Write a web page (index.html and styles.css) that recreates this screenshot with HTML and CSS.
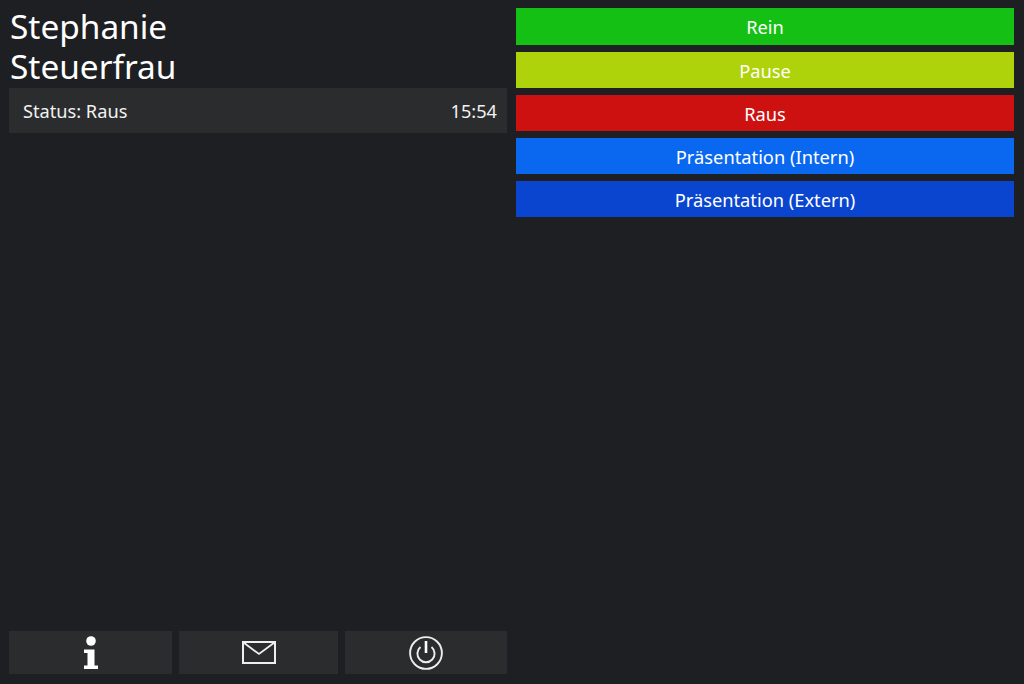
FILE: index.html
```html
<!DOCTYPE html>
<html lang="de">
<head>
    <meta charset="UTF-8">
    <meta name="viewport" content="width=device-width, initial-scale=1.0">
    <title>Stephanie Steuerfrau</title>
    <link rel="stylesheet" href="styles.css">
</head>
<body>
    <div class="app">
        <!-- Name, status and toolbar -->
        <div class="left-col">
            <h1 class="user-name">Stephanie<br>Steuerfrau</h1>
            <div class="status-row">
                <span>Status: Raus</span>
                <span>15:54</span>
            </div>
            <div class="toolbar">
                <button class="tool-btn tool-info" aria-label="Info">
                    <svg width="16" height="34" viewBox="0 0 16 34">
                        <circle cx="8" cy="5" r="4.8" fill="#fff"/>
                        <path d="M1 13.5H11.5V29.5H15V33H1V29.5H4.5V17H1Z" fill="#fff"/>
                    </svg>
                </button>
                <button class="tool-btn tool-mail" aria-label="Nachricht">
                    <svg width="34" height="24" viewBox="0 0 34 24">
                        <rect x="1" y="1" width="32" height="21" fill="none" stroke="#eee" stroke-width="2"/>
                        <path d="M1.5 1.5L17 13L32.5 1.5" fill="none" stroke="#eee" stroke-width="1.8"/>
                    </svg>
                </button>
                <button class="tool-btn tool-power" aria-label="Beenden">
                    <svg width="34" height="34" viewBox="0 0 34 34">
                        <circle cx="17" cy="17" r="15.9" fill="none" stroke="#eee" stroke-width="1.9"/>
                        <path d="M11.5 11A8.6 8.6 0 1 0 22.5 11" fill="none" stroke="#eee" stroke-width="1.9"/>
                        <path d="M17 5V17" fill="none" stroke="#fff" stroke-width="2.6"/>
                    </svg>
                </button>
            </div>
        </div>

        <!-- Status buttons -->
        <div class="right-col">
            <button class="status-btn btn-rein">Rein</button>
            <button class="status-btn btn-pause">Pause</button>
            <button class="status-btn btn-raus">Raus</button>
            <button class="status-btn btn-intern">Präsentation (Intern)</button>
            <button class="status-btn btn-extern">Präsentation (Extern)</button>
        </div>
    </div>
</body>
</html>
```

FILE: styles.css
```css
html, body {
    height: 100%;
}
body {
    font-family: 'Noto Sans', 'Open Sans', sans-serif;
    background-color: #1e1f22;
    margin: 0;
    color: #f2f2f2;
    overflow: hidden;
}
button {
    font-family: inherit;
    border: none;
    padding: 0;
    cursor: pointer;
}
.app {
    display: flex;
    gap: 9px;
    height: 100%;
    padding: 8px 10px 10px 9px;
    box-sizing: border-box;
}
.left-col {
    flex: 1;
    display: flex;
    flex-direction: column;
}
.right-col {
    flex: 1;
    display: flex;
    flex-direction: column;
    gap: 7px;
    padding-top: 0.4px;
}
.user-name {
    font-size: 33.4px;
    font-weight: 400;
    line-height: 40px;
    margin: -2px 0 0;
    padding: 0 0 2px 1px;
    color: #fff;
}
.status-row {
    display: flex;
    justify-content: space-between;
    align-items: center;
    height: 45px;
    padding: 0 10px 0 14px;
    background-color: #2b2c2e;
    font-size: 18.2px;
}
.toolbar {
    display: flex;
    gap: 7px;
    margin-top: auto;
}
.tool-btn {
    display: flex;
    align-items: center;
    justify-content: center;
    height: 43px;
    background-color: #2b2c2e;
}
.tool-info {
    width: 163px;
}
.tool-mail {
    width: 159px;
}
.tool-power {
    width: 162px;
}
.status-btn {
    height: 36.2px;
    padding-top: 1px;
    color: #fff;
    font-size: 18.3px;
}
.btn-rein {
    background-color: #13c013;
}
.btn-pause {
    background-color: #afd30b;
}
.btn-raus {
    background-color: #cd1010;
}
.btn-intern {
    background-color: #0a68f0;
}
.btn-extern {
    background-color: #0a45d0;
}
```
